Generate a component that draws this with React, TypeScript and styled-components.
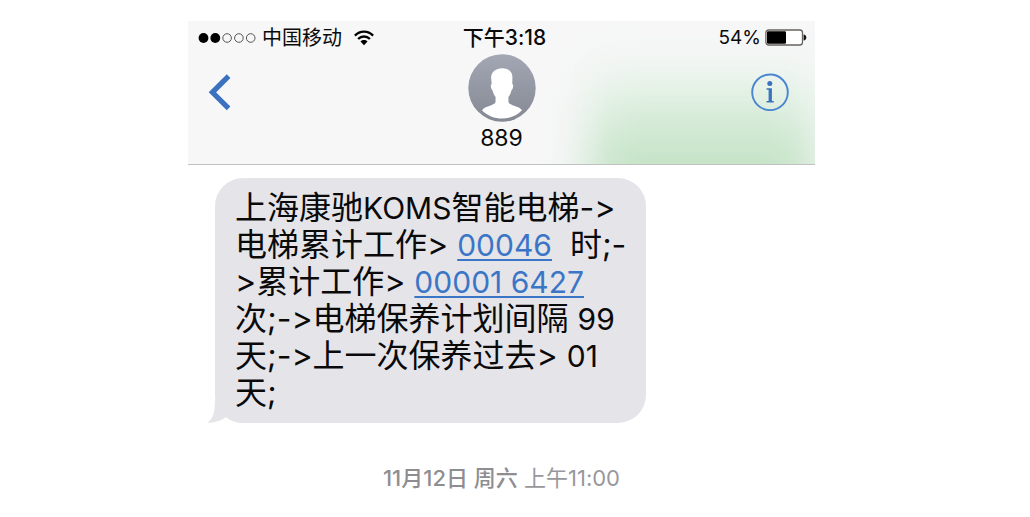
import React from "react";
import styled, { createGlobalStyle } from "styled-components";

const GlobalStyle = createGlobalStyle`
  *, *::before, *::after { box-sizing: border-box; }
  body {
    margin: 0;
    background: #fff;
    color: #0a0a0a;
    font-family: Inter, "Noto Sans CJK SC", sans-serif;
    font-feature-settings: "calt" 0;
  }
`;

const Page = styled.div`
  display: grid;
  grid-template-columns: minmax(0, 188fr) minmax(0, 627fr) minmax(0, 215fr);
  padding-top: 21px;
`;

const Screen = styled.main`
  grid-column: 2;
`;

const Header = styled.header`
  position: relative;
  overflow: hidden;
  padding-bottom: 12px;
  background: #f7f7f8;
  border-bottom: 1px solid #bfc1c2;
`;

const Glow = styled.div`
  position: absolute;
  right: 0;
  bottom: -80px;
  width: 36%;
  height: 184px;
  background: linear-gradient(#f2f7f3, #dceede 26%, #c4e3c6 54%);
  filter: blur(22px);
`;

const StatusBar = styled.div`
  position: relative;
  display: grid;
  grid-template-columns: 1fr auto 1fr;
  align-items: center;
  height: 33px;
  padding: 0 8px 0 10px;
  font-size: 20px;
  line-height: 32px;
`;

const StatusGroup = styled.div<{ $end?: boolean }>`
  display: flex;
  align-items: center;
  gap: ${(p) => (p.$end ? 4 : 6)}px;
  justify-content: ${(p) => (p.$end ? "flex-end" : "flex-start")};
`;

const Carrier = styled.span`
  margin-right: 6px;
`;

const Battery = styled.span`
  font-size: 19px;
`;

const Time = styled.time`
  margin-left: 4px;
  font-size: 21px;
  font-weight: 500;
`;

const Nav = styled.nav`
  position: relative;
  display: grid;
  grid-template-columns: 1fr auto 1fr;
  align-items: start;
  padding: 0 26px 0 20px;
`;

const IconButton = styled.button<{ $end?: boolean }>`
  display: flex;
  justify-self: ${(p) => (p.$end ? "end" : "start")};
  margin: 19px 0 0;
  padding: 0;
  border: 0;
  background: none;
  color: #3b72c0;
  cursor: pointer;
`;

const Contact = styled.div`
  display: flex;
  flex-direction: column;
  align-items: center;
  margin-left: 6px;
  svg { display: block; }
`;

const ContactName = styled.h1`
  margin: 2px 0 0;
  font-size: 23px;
  font-weight: 400;
  line-height: 28px;
`;

const Thread = styled.section`
  padding: 13px 27px 0;
`;

const Bubble = styled.article`
  position: relative;
  width: max-content;
  min-width: 431px;
  padding: 11px 20px 12px;
  border-radius: 28px;
  background: #e5e4e9;
`;

const Tail = styled.svg`
  position: absolute;
  left: -8px;
  bottom: 0;
`;

const Message = styled.p`
  position: relative;
  margin: 0;
  font-size: 32px;
  line-height: 37px;
`;

const Line = styled.span`
  display: block;
  height: 37px;
  white-space: pre;
`;

const Latin = styled.span`
  font-size: 30px;
`;

const NumberLink = styled.a`
  font-size: 30px;
  color: #3b76c6;
  text-decoration: underline;
  text-decoration-thickness: 2px;
  text-underline-offset: 3px;
`;

const Timestamp = styled.p`
  margin: 40px 0 0;
  font-size: 22px;
  line-height: 30px;
  text-align: center;
  color: #98989c;
  strong { font-weight: 500; color: #8e8e92; }
`;

const Signal = () => (
  <svg width="58" height="12" viewBox="0 0 58 12" role="img" aria-label="信号">
    {[0, 1, 2, 3, 4].map((i) => (
      <circle
        key={i}
        cx={5.5 + i * 11.8}
        cy="6"
        r={i < 2 ? 4.9 : 4.3}
        fill={i < 2 ? "#000" : "none"}
        stroke={i < 2 ? "none" : "#444"}
        strokeWidth="0.9"
      />
    ))}
  </svg>
);

const Wifi = () => (
  <svg width="20" height="16" viewBox="0 0 20 16" role="img" aria-label="Wi-Fi">
    <g fill="none" stroke="#000" strokeWidth="2.4">
      <path d="M0.9 5.6 C6 0.3 14 0.3 19.1 5.6" />
      <path d="M4.1 9 C7.4 5.7 12.6 5.7 15.9 9" />
    </g>
    <path d="M6.5 11.5 C8.5 9.6 11.5 9.6 13.5 11.5 L10 15.2Z" fill="#000" />
  </svg>
);

const BatteryIcon = () => (
  <svg width="42" height="17" viewBox="0 0 42 17" aria-hidden="true">
    <rect x="0.9" y="1" width="36.6" height="15" rx="2.8" fill="#fff" stroke="#66625e" strokeWidth="1.3" />
    <rect x="2" y="2.2" width="19" height="12.6" rx="1.2" fill="#000" />
    <path d="M38.6 5.5 C42.2 5.8 42.2 11.2 38.6 11.5Z" fill="#111" />
  </svg>
);

const Avatar = () => (
  <svg width="68" height="68" viewBox="0 0 68 68" aria-hidden="true">
    <defs>
      <linearGradient id="avatarFill" x1="0" y1="0" x2="0" y2="1">
        <stop offset="0" stopColor="#a2a7b3" />
        <stop offset="1" stopColor="#858994" />
      </linearGradient>
    </defs>
    <circle cx="34" cy="34" r="33.7" fill="url(#avatarFill)" />
    <path
      fill="#fff"
      d="M34 14.2 C39.8 14 44 17.2 44.4 22.4 L44.3 30 C45.8 30.3 45.3 35.3 43.4 36.4 C42.8 39.4 41.7 41.2 40.4 43 L40.5 48.3 C42 51.7 51 52 54 56.2 C48.8 61.6 41.5 64.6 34 64.6 C26.5 64.6 19.2 61.6 14 56.2 C17 52 26 51.7 27.5 48.3 L27.6 43 C26.3 41.2 25.2 39.4 24.6 36.4 C22.7 35.3 22.2 30.3 23.7 30 L23.1 23 C23.4 17.8 28 14.2 34 14.2Z"
    />
  </svg>
);

const App: React.FC = () => (
  <>
    <GlobalStyle />
    <Page>
      <Screen>
        <Header>
          <Glow />
          <StatusBar>
            <StatusGroup>
              <Signal />
              <Carrier>中国移动</Carrier>
              <Wifi />
            </StatusGroup>
            <Time>下午3:18</Time>
            <StatusGroup $end>
              <Battery>54%</Battery>
              <BatteryIcon />
            </StatusGroup>
          </StatusBar>
          <Nav>
            <IconButton type="button" aria-label="返回">
              <svg width="24" height="38" viewBox="0 0 24 38">
                <path d="M20.6 3.2 L4.4 19.3 L20.6 35.4" fill="none" stroke="currentColor" strokeWidth="5.2" />
              </svg>
            </IconButton>
            <Contact>
              <Avatar />
              <ContactName>889</ContactName>
            </Contact>
            <IconButton type="button" aria-label="详细信息" $end>
              <svg width="38" height="38" viewBox="0 0 38 38">
                <circle cx="19" cy="19.3" r="17.8" fill="none" stroke="#4a84d3" strokeWidth="1.9" />
                <circle cx="18.8" cy="10.4" r="2.5" fill="currentColor" />
                <path d="M15.6 15.2 H20.9 V28 H22.8 V29.6 H15.6 V28 H17.6 V16.8 H15.6Z" fill="currentColor" />
              </svg>
            </IconButton>
          </Nav>
        </Header>
        <Thread>
          <Bubble>
            <Tail width="36" height="24" viewBox="0 0 36 24" aria-hidden="true">
              <path d="M8 0 C8 11 7 20 0 23.6 C7 24 14 22 19 18 C24 22 30 24 36 24 L36 0Z" fill="#e5e4e9" />
            </Tail>
            <Message>
              <Line>上海康驰<Latin>KOMS</Latin>智能电梯-&gt;</Line>
              <Line>电梯累计工作&gt; <NumberLink href="tel:00046">00046</NumberLink>{"  "}时;-</Line>
              <Line>&gt;累计工作&gt; <NumberLink href="tel:000016427">00001 6427</NumberLink></Line>
              <Line>次;-&gt;电梯保养计划间隔 <Latin>99</Latin></Line>
              <Line>天;-&gt;上一次保养过去&gt; <Latin>01</Latin></Line>
              <Line>天;</Line>
            </Message>
          </Bubble>
          <Timestamp>
            <strong>11月12日 周六</strong> 上午11:00
          </Timestamp>
        </Thread>
      </Screen>
    </Page>
  </>
);

export default App;
